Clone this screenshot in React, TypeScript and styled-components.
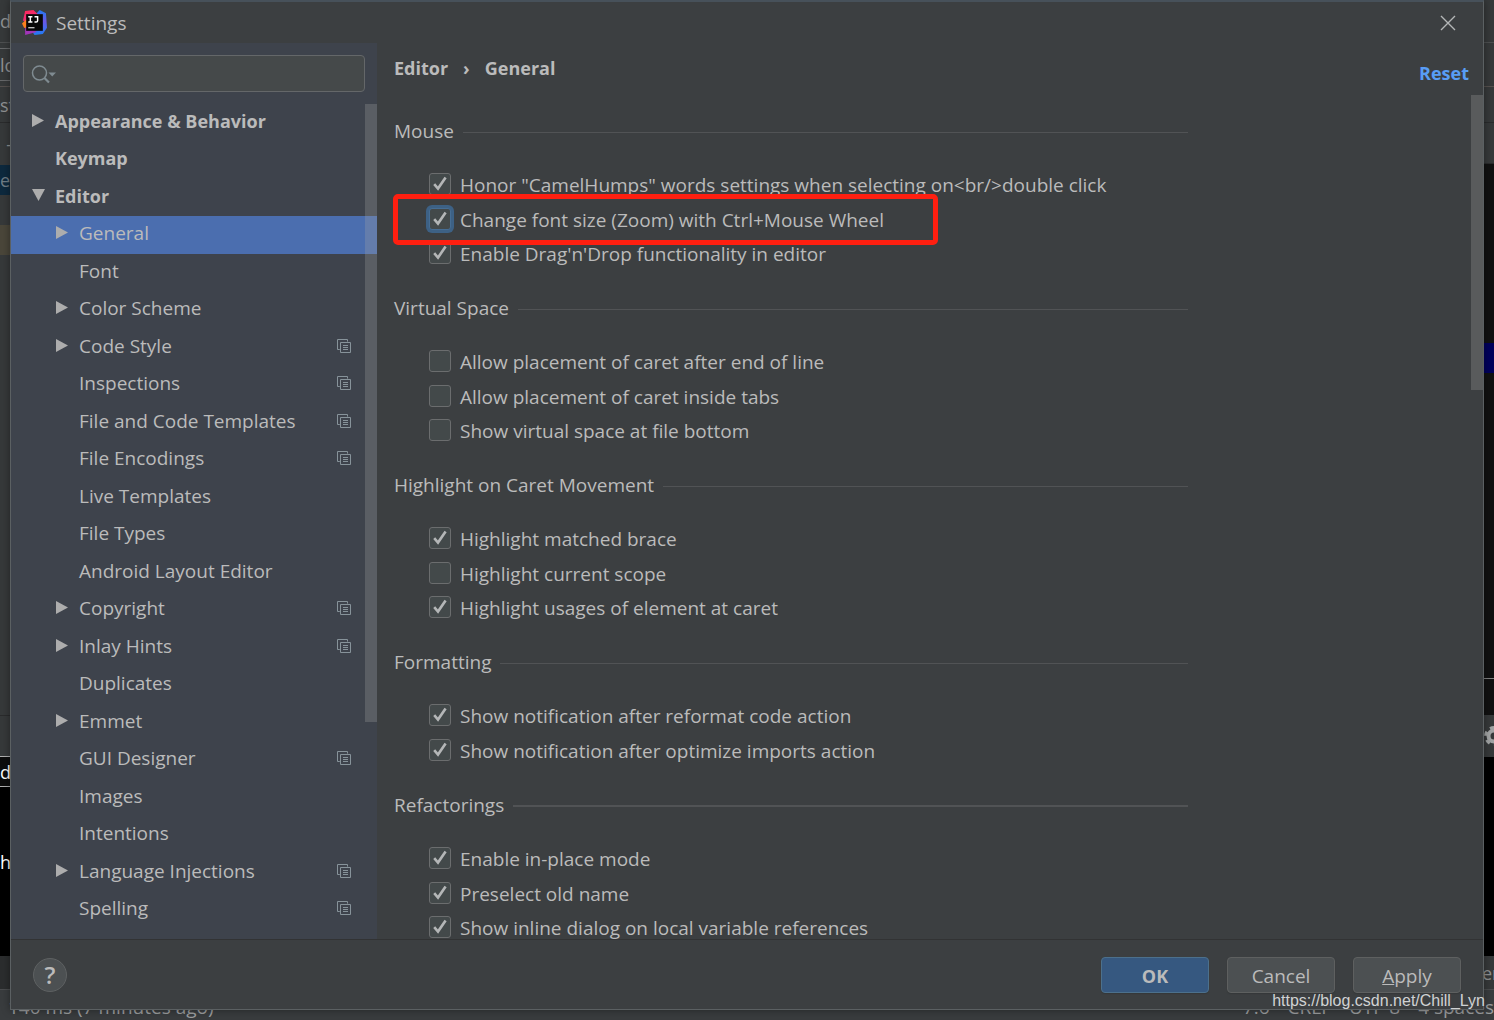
import React, { useState } from "react";
import styled, { createGlobalStyle, css } from "styled-components";

const font = `"Open Sans", "Noto Sans", sans-serif`;

const GlobalStyle = createGlobalStyle`
  *, *::before, *::after { box-sizing: border-box; }
  body {
    margin: 0;
    background: #3c3f41;
    color: #bbbbbb;
    font: 19px/26px ${font};
    overflow: hidden;
  }
  ul { list-style: none; margin: 0; padding: 0; }
  button, input { font: inherit; color: inherit; }
`;

/* ---------- IDE window behind the dialog ---------- */

const Desktop = styled.div`
  position: relative;
  display: flex;
  flex-direction: column;
  height: 100vh;
  overflow: hidden;
`;

const IdeBody = styled.div`
  flex: 1;
  display: flex;
  justify-content: space-between;
  min-height: 0;
  background: #2b2d2e;
`;

const IdeColumn = styled.div`
  width: 12px;
  display: flex;
  flex-direction: column;
  overflow: hidden;
`;

const Strip = styled.div<{ $h?: number; $bg?: string; $fg?: string; $line?: string; $end?: boolean }>`
  flex: ${(p) => (p.$h ? `0 0 ${p.$h}px` : "1 1 0")};
  display: flex;
  align-items: center;
  justify-content: ${(p) => (p.$end ? "flex-end" : "flex-start")};
  background: ${(p) => p.$bg ?? "#36393a"};
  color: ${(p) => p.$fg ?? "#8f9192"};
  border-bottom: ${(p) => (p.$line ? `1px solid ${p.$line}` : "0")};
  font-size: 18px;
  white-space: nowrap;
  overflow: hidden;
`;

const StatusBar = styled.div`
  flex: 0 0 30px;
  display: flex;
  justify-content: space-between;
  align-items: center;
  padding: 4px 0 0 8px;
  background: #393c3e;
  border-top: 1px solid #4a4c4e;
  color: #9b9d9e;
  white-space: nowrap;
`;

const StatusItems = styled.div`
  display: flex;
  gap: 18px;
`;

/* ---------- dialog frame ---------- */

const Dialog = styled.section`
  position: absolute;
  inset: 0 10px 10px;
  display: flex;
  flex-direction: column;
  background: #3c3f41;
  border: 1px solid #5b6062;
  border-top: 2px solid #47515a;
  box-shadow: 0 0 8px rgba(0, 0, 0, 0.4);
`;

const TitleBar = styled.header`
  flex: 0 0 41px;
  display: flex;
  align-items: center;
  gap: 9px;
  padding: 0 24px 0 11px;
`;

const Title = styled.h1`
  flex: 1;
  margin: 0;
  font-size: 19px;
  line-height: 26px;
  font-weight: 400;
`;

const IconButton = styled.button`
  display: flex;
  padding: 3px;
  border: 0;
  background: none;
  color: #b4b6b7;
`;

const DialogBody = styled.div`
  flex: 1;
  display: flex;
  min-height: 0;
`;

/* ---------- sidebar ---------- */

const Sidebar = styled.nav`
  flex: 0 0 366px;
  display: flex;
  flex-direction: column;
  gap: 12px;
  padding-top: 12px;
  background: #3e434c;
  overflow: hidden;
`;

const SearchBox = styled.label`
  display: flex;
  align-items: center;
  height: 37px;
  margin: 0 12px;
  padding: 0 7px;
  border: 1px solid #646769;
  border-radius: 4px;
  background: #45494a;
`;

const SearchInput = styled.input`
  flex: 1;
  min-width: 0;
  border: 0;
  outline: 0;
  background: none;
`;

const TreeArea = styled.div`
  position: relative;
  flex: 1;
  min-height: 0;
  overflow: hidden;
`;

const Thumb = styled.div<{ $h: string; $color: string }>`
  position: absolute;
  top: 0;
  right: 0;
  width: 12px;
  height: ${(p) => p.$h};
  background: ${(p) => p.$color};
`;

const TreeRow = styled.li<{ $level: number; $bold?: boolean; $selected?: boolean }>`
  display: flex;
  align-items: center;
  gap: 9px;
  height: 37px;
  padding: 0 26px 4px ${(p) => 21 + p.$level * 24}px;
  font-size: ${(p) => (p.$bold ? 18 : 19)}px;
  font-weight: ${(p) => (p.$bold ? 700 : 400)};
  background: ${(p) => (p.$selected ? "#4b6eaf" : "transparent")};
  &:nth-child(even) {
    height: 38px;
  }
`;

const ArrowSlot = styled.span`
  flex: 0 0 14px;
  display: flex;
  color: #adadad;
`;

const TreeLabel = styled.span`
  flex: 1;
  white-space: nowrap;
`;

/* ---------- settings page ---------- */

const Page = styled.main`
  flex: 1;
  min-width: 0;
  display: flex;
  flex-direction: column;
`;

const PageHeader = styled.div`
  flex: 0 0 52px;
  display: flex;
  justify-content: space-between;
  padding: 12px 14px 9px 17px;
  font-size: 18px;
  font-weight: 700;
`;

const Crumbs = styled.div`
  display: flex;
  align-self: flex-start;
  gap: 15px;
`;

const ResetLink = styled.a`
  align-self: flex-end;
  color: #589df6;
  text-decoration: none;
`;

const ScrollArea = styled.div`
  position: relative;
  flex: 1;
  min-height: 0;
  overflow: hidden;
  padding: 23px 0 0 17px;
`;

const Group = styled.fieldset`
  max-width: 794px;
  margin: 0 0 24px;
  padding: 0;
  border: 0;
`;

const GroupTitle = styled.legend<{ $thick?: boolean }>`
  display: flex;
  align-items: center;
  gap: 9px;
  width: 100%;
  margin-bottom: 24px;
  padding: 0;
  &::after {
    content: "";
    flex: 1;
    height: ${(p) => (p.$thick ? 2 : 1)}px;
    margin-top: 2px;
    background: #515355;
  }
`;

const OptionRow = styled.li`
  position: relative;
  display: flex;
  align-items: center;
  height: 34px;
  padding-left: 35px;
  &:nth-child(even) {
    height: 35px;
  }
`;

const OptionLabel = styled.label`
  display: flex;
  align-items: center;
  gap: 9px;
  white-space: nowrap;
`;

const CheckSlot = styled.span`
  display: grid;
  place-items: center;
  padding-bottom: 2px;
  & > * {
    grid-area: 1 / 1;
  }
`;

const CheckInput = styled.input<{ $focused?: boolean }>`
  appearance: none;
  width: 22px;
  height: 22px;
  margin: 0;
  border: 1px solid #6b6d6e;
  border-radius: 3px;
  background: #43494a;
  ${(p) =>
    p.$focused &&
    css`
      border-color: #466d94;
      box-shadow: 0 0 0 3px #3d6185;
    `}
`;

const Tick = styled.svg`
  z-index: 1;
  pointer-events: none;
`;

const Marker = styled.div`
  position: absolute;
  top: -8px;
  left: -1px;
  width: 545px;
  height: 51px;
  border: 5px solid #ff1f10;
  border-radius: 5px;
  pointer-events: none;
  z-index: 2;
`;

/* ---------- footer ---------- */

const Footer = styled.footer`
  flex: 0 0 70px;
  display: flex;
  align-items: center;
  gap: 18px;
  padding: 1px 22px 0;
  border-top: 1px solid #323334;
`;

const HelpButton = styled.button`
  width: 34px;
  height: 34px;
  margin-right: auto;
  padding: 0;
  border: 1px solid #5e6162;
  border-radius: 50%;
  background: #4c5052;
  font-size: 24px;
  line-height: 30px;
  font-weight: 600;
`;

const Button = styled.button<{ $primary?: boolean }>`
  width: 108px;
  height: 36px;
  padding: 2px 0 0;
  border: 1px solid ${(p) => (p.$primary ? "#4c708c" : "#5e6060")};
  border-radius: 4px;
  background: ${(p) => (p.$primary ? "#365880" : "#4c5052")};
  font-size: ${(p) => (p.$primary ? 18 : 19)}px;
  font-weight: ${(p) => (p.$primary ? 700 : 400)};
  box-shadow: 0 1px 1px #35383a;
`;

const Watermark = styled.div`
  position: absolute;
  right: 9px;
  bottom: 8px;
  color: #d0d2d3;
  font: 16px/22px "Liberation Sans", Arial, sans-serif;
`;

/* ---------- icons ---------- */

const AppLogo = () => (
  <svg width="25" height="25" viewBox="0 0 24 24" aria-hidden="true">
    <defs>
      <linearGradient id="hot" x1="0" y1="0" x2="0.3" y2="1">
        <stop offset="0" stopColor="#fe2857" />
        <stop offset="1" stopColor="#e8318c" />
      </linearGradient>
      <linearGradient id="cold" x1="0" y1="0" x2="0" y2="1">
        <stop offset="0" stopColor="#1f7bf2" />
        <stop offset="0.45" stopColor="#6b57e8" />
        <stop offset="1" stopColor="#1f7df5" />
      </linearGradient>
    </defs>
    <path d="M14 3 17 0 23 3 24 17 20 23 12 24 8 18Z" fill="url(#cold)" />
    <path d="M3 1 11 0 16 5 8 15 1 10Z" fill="url(#hot)" />
    <path d="M0 13 4 9 7 18 2 17Z" fill="#fc801d" />
    <path d="M3 17 8 16 14 21 3 24Z" fill="#a135b8" />
    <rect x="4" y="4" width="16" height="16" fill="#080808" />
    <path d="M6 6.5h4M8 6.5v5M6 11.5h4M12 6.5h3v3.7q0 1.3-1.5 1.3h-1.5" fill="none" stroke="#fff" strokeWidth="1.4" />
    <path d="M6 17h6" stroke="#d0d0d0" strokeWidth="1.2" />
  </svg>
);

const CloseIcon = () => (
  <svg width="16" height="16" viewBox="0 0 16 16" aria-hidden="true">
    <path d="M1 1 15 15M15 1 1 15" stroke="currentColor" strokeWidth="1.4" />
  </svg>
);

const SearchIcon = () => (
  <svg width="26" height="20" viewBox="0 0 26 20" fill="none" aria-hidden="true">
    <circle cx="8.5" cy="9" r="7" stroke="#7f8b91" strokeWidth="1.5" />
    <path d="M13.5 14 18 18.5" stroke="#7f8b91" strokeWidth="2.2" />
    <path d="M17.5 8.5H25L21.2 12.5Z" fill="#7f8b91" />
  </svg>
);

const Arrow = ({ open }: { open?: boolean }) => (
  <svg width="14" height="14" viewBox="0 0 14 14" fill="currentColor" aria-hidden="true">
    <path d={open ? "M0 0H13L6.5 12Z" : "M0 0 12 6.5 0 13Z"} />
  </svg>
);

const ScopeIcon = () => (
  <svg width="14" height="14" viewBox="0 0 14 14" fill="none" stroke="#87939a" aria-hidden="true">
    <path d="M2.8 10.5H.5V.5H10.5V2.6" />
    <path d="M3.5 3.5H13.5V13.5H3.5Z" />
    <path d="M6 6.5H11M6 8.5H11M6 10.5H11" />
  </svg>
);

const Gear = styled.svg`
  flex-shrink: 0;
`;

const GearIcon = () => (
  <Gear width="24" height="20" viewBox="-2 0 24 20" aria-hidden="true">
    <circle cx="10" cy="10" r="5.5" fill="none" stroke="#a2a4a5" strokeWidth="4" />
    <circle cx="10" cy="10" r="8.4" fill="none" stroke="#a2a4a5" strokeWidth="3" strokeDasharray="4.4 4.4" />
  </Gear>
);

/* ---------- data ---------- */

type Node = { label: string; level?: number; arrow?: "open" | "closed"; scope?: boolean; selected?: boolean };

const tree: Node[] = [
  { label: "Appearance & Behavior", level: 0, arrow: "closed" },
  { label: "Keymap", level: 0 },
  { label: "Editor", level: 0, arrow: "open" },
  { label: "General", arrow: "closed", selected: true },
  { label: "Font" },
  { label: "Color Scheme", arrow: "closed" },
  { label: "Code Style", arrow: "closed", scope: true },
  { label: "Inspections", scope: true },
  { label: "File and Code Templates", scope: true },
  { label: "File Encodings", scope: true },
  { label: "Live Templates" },
  { label: "File Types" },
  { label: "Android Layout Editor" },
  { label: "Copyright", arrow: "closed", scope: true },
  { label: "Inlay Hints", arrow: "closed", scope: true },
  { label: "Duplicates" },
  { label: "Emmet", arrow: "closed" },
  { label: "GUI Designer", scope: true },
  { label: "Images" },
  { label: "Intentions" },
  { label: "Language Injections", arrow: "closed", scope: true },
  { label: "Spelling", scope: true },
];

type OptionData = { label: string; on?: boolean; marked?: boolean };

const groups: { title: string; thick?: boolean; options: OptionData[] }[] = [
  {
    title: "Mouse",
    options: [
      { label: 'Honor "CamelHumps" words settings when selecting on<br/>double click', on: true },
      { label: "Change font size (Zoom) with Ctrl+Mouse Wheel", on: true, marked: true },
      { label: "Enable Drag'n'Drop functionality in editor", on: true },
    ],
  },
  {
    title: "Virtual Space",
    options: [
      { label: "Allow placement of caret after end of line" },
      { label: "Allow placement of caret inside tabs" },
      { label: "Show virtual space at file bottom" },
    ],
  },
  {
    title: "Highlight on Caret Movement",
    options: [
      { label: "Highlight matched brace", on: true },
      { label: "Highlight current scope" },
      { label: "Highlight usages of element at caret", on: true },
    ],
  },
  {
    title: "Formatting",
    options: [
      { label: "Show notification after reformat code action", on: true },
      { label: "Show notification after optimize imports action", on: true },
    ],
  },
  {
    title: "Refactorings",
    thick: true,
    options: [
      { label: "Enable in-place mode", on: true },
      { label: "Preselect old name", on: true },
      { label: "Show inline dialog on local variable references", on: true },
    ],
  },
];

const Option = ({ label, on, marked }: OptionData) => {
  const [checked, setChecked] = useState(!!on);
  return (
    <OptionRow>
      <OptionLabel>
        <CheckSlot>
          <CheckInput
            type="checkbox"
            checked={checked}
            $focused={marked}
            onChange={(e) => setChecked(e.target.checked)}
          />
          {checked && (
            <Tick width="22" height="22" viewBox="0 0 22 22" fill="none" aria-hidden="true">
              <path d="M5.2 11.2 9 15.6 16.6 4.6" stroke="#b4b6b7" strokeWidth="2.6" />
            </Tick>
          )}
        </CheckSlot>
        {label}
      </OptionLabel>
      {marked && <Marker />}
    </OptionRow>
  );
};

export default function App() {
  const [query, setQuery] = useState("");
  return (
    <>
      <GlobalStyle />
      <Desktop>
        <IdeBody>
          <IdeColumn>
            <Strip $h={43} $line="#4d4f50">de</Strip>
            <Strip $h={6} $line="#66686a" />
            <Strip $h={32} $line="#66686a">lo</Strip>
            <Strip $h={6} $line="#55504e" />
            <Strip $h={36} $line="#2a2b2c">st</Strip>
            <Strip $h={42} $end>-</Strip>
            <Strip $h={30} $bg="#0d293e" $fg="#6f7c85">ea</Strip>
            <Strip $h={30} />
            <Strip $h={30} $bg="#4a463a" />
            <Strip $line="#2a2b2c" />
            <Strip $h={41} $line="#b0b0b0" />
            <Strip $h={30} $bg="#0d0d0d" $fg="#ffffff" $line="#b0b0b0">d</Strip>
            <Strip $h={150} $bg="#000000" $fg="#ffffff">h</Strip>
            <Strip $h={19} $bg="#000000" />
            <Strip $h={33} $bg="#2b2d2e" />
          </IdeColumn>
          <IdeColumn>
            <Strip $h={43} $line="#4d4f50" />
            <Strip $h={44} $line="#55504e" />
            <Strip $h={36} $line="#2a2b2c" />
            <Strip $h={41} $line="#2a2b2c" />
            <Strip $h={179} $bg="#111111" />
            <Strip $h={30} $bg="#00005c" />
            <Strip $bg="#111111" $line="#808080" />
            <Strip $h={36} $bg="#111111" />
            <Strip $h={42}>
              <GearIcon />
            </Strip>
            <Strip $h={199} $bg="#000000" />
            <Strip $h={33}>er</Strip>
          </IdeColumn>
        </IdeBody>
        <StatusBar>
          <span>140 ms (7 minutes ago)</span>
          <StatusItems>
            <span>7:6</span>
            <span>CRLF</span>
            <span>UTF-8</span>
            <span>4 spaces</span>
          </StatusItems>
        </StatusBar>

        <Dialog aria-label="Settings">
          <TitleBar>
            <AppLogo />
            <Title>Settings</Title>
            <IconButton aria-label="Close">
              <CloseIcon />
            </IconButton>
          </TitleBar>

          <DialogBody>
            <Sidebar>
              <SearchBox>
                <SearchIcon />
                <SearchInput
                  type="text"
                  aria-label="Search settings"
                  value={query}
                  onChange={(e) => setQuery(e.target.value)}
                />
              </SearchBox>
              <TreeArea>
                <ul>
                  {tree.map((n) => (
                    <TreeRow
                      key={n.label}
                      $level={n.level ?? 1}
                      $bold={n.level === 0}
                      $selected={n.selected}
                    >
                      <ArrowSlot>{n.arrow && <Arrow open={n.arrow === "open"} />}</ArrowSlot>
                      <TreeLabel>{n.label}</TreeLabel>
                      {n.scope && <ScopeIcon />}
                    </TreeRow>
                  ))}
                </ul>
                <Thumb $h="74%" $color="rgba(166, 166, 166, 0.28)" />
              </TreeArea>
            </Sidebar>

            <Page>
              <PageHeader>
                <Crumbs>
                  <span>Editor</span>
                  <span>›</span>
                  <span>General</span>
                </Crumbs>
                <ResetLink href="#reset">Reset</ResetLink>
              </PageHeader>
              <ScrollArea>
                {groups.map((g) => (
                  <Group key={g.title}>
                    <GroupTitle $thick={g.thick}>{g.title}</GroupTitle>
                    <ul>
                      {g.options.map((o) => (
                        <Option key={o.label} {...o} />
                      ))}
                    </ul>
                  </Group>
                ))}
                <Thumb $h="35%" $color="#595b5c" />
              </ScrollArea>
            </Page>
          </DialogBody>

          <Footer>
            <HelpButton aria-label="Help">?</HelpButton>
            <Button $primary>OK</Button>
            <Button>Cancel</Button>
            <Button>
              <u>A</u>pply
            </Button>
          </Footer>
        </Dialog>
        <Watermark>https://blog.csdn.net/Chill_Lyn</Watermark>
      </Desktop>
    </>
  );
}
